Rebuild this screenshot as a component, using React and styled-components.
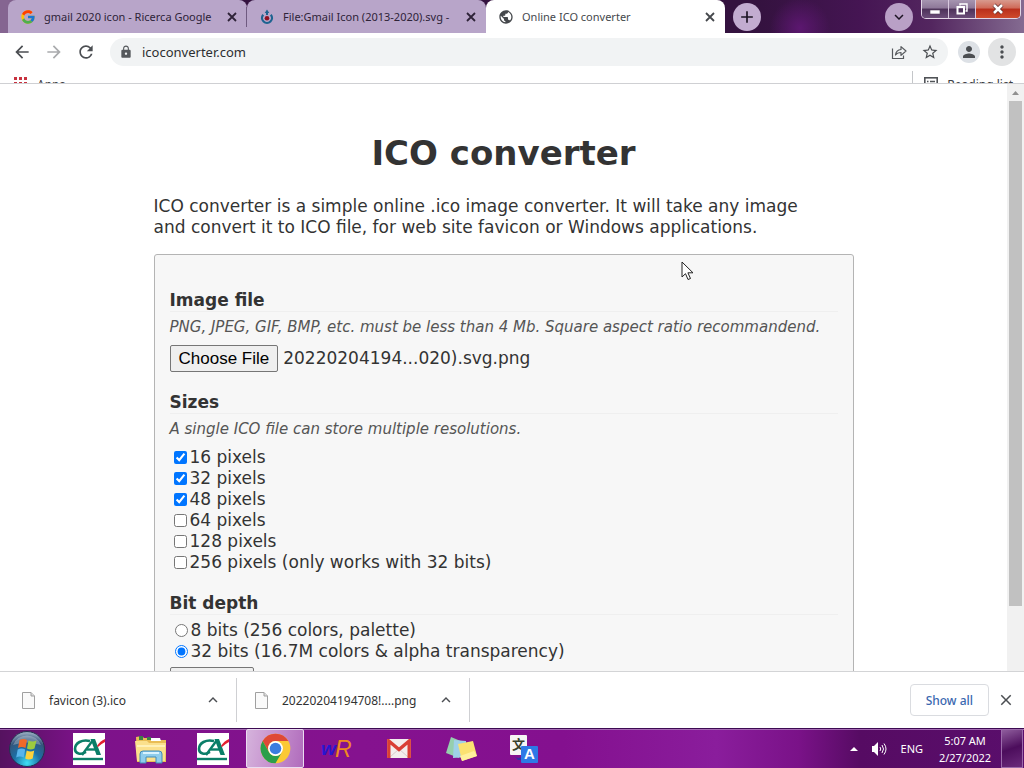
import React, { useRef, useState } from 'react';
import styled, { createGlobalStyle } from 'styled-components';
import {
  MdAdd,
  MdArrowBack,
  MdArrowForward,
  MdClose,
  MdExpandLess,
  MdExpandMore,
  MdLock,
  MdMoreVert,
  MdPerson,
  MdPublic,
  MdRefresh,
  MdStarBorder,
} from 'react-icons/md';
import { FcGoogle } from 'react-icons/fc';

const GlobalStyle = createGlobalStyle`
  * {
    box-sizing: border-box;
  }

  body {
    margin: 0;
    background: #fff;
    font-family: "Noto Sans", "Open Sans", sans-serif;
    font-size: 12px;
    color: #333;
  }

  button, input {
    font: inherit;
    color: inherit;
  }

  svg {
    display: block;
    flex: none;
  }
`;

const Desktop = styled.div`
  display: flex;
  flex-direction: column;
  height: 100vh;
  overflow: hidden;
  position: relative;
`;

/* ---------- tab strip ---------- */

const TabStrip = styled.header`
  display: flex;
  height: 33px;
  flex: none;
  padding-left: 8px;
  background:
    radial-gradient(circle at 800px 28px, #5c1770 0, transparent 30px),
    linear-gradient(90deg, #856591 0, #856591 8px, #34123f 60px, #34123f 74%, #451553 84%, #53265f 91%, #846b91 100%);
`;

const Tab = styled.div`
  display: flex;
  align-items: center;
  flex: 0 1 239px;
  min-width: 0;
  padding: 0 8px 0 12px;
  gap: 8px;
  font-size: 11px;
  background: ${(props) => (props.$active ? '#fff' : '#b8a5c9')};
  border-radius: 8px 8px 0 0;
  color: ${(props) => (props.$active ? '#45484c' : '#2e2338')};
`;

const TabTitle = styled.span`
  flex: 1;
  min-width: 0;
  overflow: hidden;
  white-space: nowrap;
`;

const TabDivider = styled.span`
  width: 1px;
  height: 20px;
  margin-left: -1px;
  margin-right: -8px;
  background: #6f5a80;
`;

const IconButton = styled.button`
  display: flex;
  align-items: center;
  justify-content: center;
  flex: none;
  width: ${(props) => props.$size || 28}px;
  height: ${(props) => props.$size || 28}px;
  padding: 0;
  border: 0;
  border-radius: 50%;
  background: ${(props) => props.$bg || 'transparent'};
  color: ${(props) => props.$color || '#4b4e52'};
`;

const StripTools = styled.div`
  display: flex;
  flex: 1;
  justify-content: space-between;
  padding: 3px 8px 0;
`;

const WindowButtons = styled.div`
  display: flex;
  flex: none;
  height: 19px;
  margin-right: 3px;
  border: 1px solid #e2d6e6;
  border-top: 0;
  border-radius: 0 0 5px 5px;
  overflow: hidden;
`;

const WindowButton = styled.button`
  display: flex;
  align-items: center;
  justify-content: center;
  width: ${(props) => (props.$close ? 44 : 27)}px;
  padding: 0;
  border: 0;
  border-right: ${(props) => (props.$close ? '0' : '1px solid #d8c9de')};
  background: ${(props) =>
    props.$close
      ? 'linear-gradient(#d89a8e 0, #cf6a58 45%, #b92f1c 50%, #cf4a2c 100%)'
      : 'linear-gradient(#a695b0 0, #8d7798 45%, #4d3159 50%, #6b4d79 100%)'};
`;

/* ---------- toolbar ---------- */

const Toolbar = styled.nav`
  display: flex;
  align-items: center;
  flex: none;
  height: 38px;
  padding: 0 8px;
  gap: 4px;
`;

const AddressBar = styled.form`
  display: flex;
  align-items: center;
  flex: 1;
  height: 28px;
  margin: 0 6px;
  padding: 0 6px 0 9px;
  gap: 9px;
  border-radius: 14px;
  background: #f1f3f4;
`;

const AddressInput = styled.input`
  flex: 1;
  min-width: 0;
  padding: 0;
  border: 0;
  outline: 0;
  background: transparent;
  font-size: 13px;
  color: #2c2e31;
`;

const ToolbarEnd = styled.div`
  display: flex;
  align-items: center;
  gap: 8px;
`;

const BookmarksBar = styled.div`
  display: flex;
  justify-content: space-between;
  flex: none;
  height: 13px;
  overflow: hidden;
  border-bottom: 1px solid #cfd0d3;
`;

const Bookmark = styled.a`
  display: flex;
  align-items: center;
  height: 26px;
  gap: 9px;
  padding: 0 11px 0 ${(props) => (props.$divided ? '11px' : '14px')};
  border-left: ${(props) => (props.$divided ? '1px solid #c4c6c9' : '0')};
  color: #3c4043;
  text-decoration: none;
`;

/* ---------- page ---------- */

const Viewport = styled.div`
  display: flex;
  flex: 1;
  min-height: 0;
`;

const Page = styled.main`
  flex: 1;
  min-width: 0;
  overflow: hidden;
  font-family: "DejaVu Sans", Verdana, sans-serif;
  font-size: 17px;
  line-height: 21px;
  color: #333;
`;

const Content = styled.div`
  max-width: 700px;
  margin: 0 auto;
`;

const PageTitle = styled.h1`
  margin: 48px 0 22px;
  font-size: 34px;
  line-height: 42px;
  text-align: center;
`;

const Intro = styled.p`
  margin: 0 0 16px;
  padding-right: 32px;
`;

const ConvertForm = styled.form`
  padding: 15px;
  border: 1px solid #b4b4b4;
  border-radius: 3px;
  background: #f7f7f7;
`;

const SectionTitle = styled.h2`
  margin: 20px 0 5px;
  border-bottom: 1px solid #efefef;
  font-size: 17px;
  line-height: 21px;
`;

const Hint = styled.p`
  margin: 0 0 7px;
  font-size: 15px;
  font-style: italic;
  color: #555;
`;

const FileRow = styled.div`
  display: flex;
  align-items: center;
  gap: 5px;
`;

const FormButton = styled.button`
  height: 27px;
  min-width: 84px;
  padding: 0 8px;
  border: 1px solid #767676;
  border-radius: 2px;
  background: #efefef;
  color: #000;
  font-family: "Liberation Sans", Arial, sans-serif;
  font-size: 17px;
`;

const Option = styled.label`
  display: flex;
  align-items: center;
  height: 21px;

  input {
    width: 13px;
    height: 13px;
    margin: 0 3px 0 ${(props) => (props.$radio ? 5 : 4)}px;
  }
`;

const Actions = styled.div`
  margin-top: 5px;
`;

const ScrollBar = styled.div`
  display: flex;
  flex-direction: column;
  align-items: center;
  flex: none;
  width: 17px;
  background: #f1f1f1;
`;

const ScrollArrow = styled.span`
  display: flex;
  align-items: center;
  height: 17px;
`;

const ScrollThumb = styled.div`
  width: 13px;
  height: 86%;
  background: #c1c1c1;
`;

/* ---------- downloads ---------- */

const DownloadBar = styled.section`
  display: flex;
  align-items: center;
  flex: none;
  height: 57px;
  padding: 0 4px;
  border-top: 1px solid #d3d4d6;
  background: #fff;
`;

const DownloadItem = styled.div`
  display: flex;
  align-items: center;
  flex: 0 1 233px;
  height: 44px;
  padding: 0 9px 0 16px;
  border-right: 1px solid #cfd0d3;
`;

const DownloadName = styled.span`
  flex: 1;
  margin-left: 12px;
  white-space: nowrap;
`;

const ShowAll = styled.button`
  height: 32px;
  margin-left: auto;
  margin-right: 3px;
  padding: 0 15px;
  border: 1px solid #dadce0;
  border-radius: 4px;
  background: #fff;
  color: #3a68b0;
  font-weight: 500;
`;

/* ---------- taskbar ---------- */

const Taskbar = styled.footer`
  display: flex;
  align-items: center;
  flex: none;
  height: 40px;
  border-top: 1px solid #3c0a52;
  background: linear-gradient(90deg, #55125f 0, #7d128a 8%, #85128f 35%, #84108f 55%, #8a1d9c 70%, #7a1288 78%, #560b63 84%, #5a0e6c 100%);
  box-shadow: inset 0 1px 0 #a66bb4;
  color: #fff;
`;

const StartButton = styled.button`
  display: flex;
  justify-content: center;
  width: 54px;
  margin-right: 6px;
  padding: 0;
  border: 0;
  background: transparent;
`;

const TaskList = styled.div`
  display: flex;
  flex: 1;
  gap: 4px;
`;

const TaskButton = styled.button`
  display: flex;
  align-items: center;
  justify-content: center;
  width: 58px;
  height: 39px;
  padding: 0;
  border: ${(props) => (props.$open ? '1px solid #eadcf0' : '0')};
  border-radius: 2px;
  background: ${(props) =>
    props.$open ? 'linear-gradient(100deg, #d5b3dc 0, #c793cf 45%, #b06cbc 100%)' : 'transparent'};
`;

const Tray = styled.div`
  display: flex;
  align-items: center;
  height: 100%;
  font-size: 11px;
`;

const Language = styled.span`
  margin: 0 15px 0 14px;
`;

const Clock = styled.time`
  width: 54px;
  line-height: 17px;
  text-align: center;
  white-space: nowrap;
`;

const ShowDesktop = styled.button`
  width: 22px;
  height: 100%;
  margin-left: 9px;
  margin-right: 1px;
  padding: 0;
  border: 1px solid #9c6bab;
  background: linear-gradient(160deg, #8f5d9d, #4c0d5c 50%, #6b2a7b);
`;

const Cursor = styled.svg`
  position: absolute;
  left: 681px;
  top: 261px;
`;

/* ---------- drawings ---------- */

const TabCloseIcon = () => (
  <svg width="10" height="10" viewBox="0 0 10 10" stroke="currentColor" strokeWidth="1.800">
    <path d="M1 1l8 8M9 1l-8 8" />
  </svg>
);

const CommonsIcon = () => (
  <svg width="16" height="16" viewBox="0 0 16 16" fill="none">
    <path d="M4.2 5.7a5 5 0 1 0 7.6 0" stroke="#1d6390" strokeWidth="2.2" />
    <path d="M8 0.5 10.3 4H9v2H7V4H5.7z" fill="#1d6390" />
    <circle cx="8" cy="9.3" r="2.3" fill="#8f1022" />
  </svg>
);

const ShareIcon = () => (
  <svg width="16" height="16" viewBox="0 0 16 16" fill="none" stroke="#55585c" strokeWidth="1.2">
    <path d="M1.5 4.5v10h11v-3" />
    <path d="M4.5 11c.4-3.600 2.300-5.300 5.500-5.500V2.600l5 4.400-5 4.400V8.500c-2.500 0-4.200.7-5.500 2.500z" strokeLinejoin="round" />
  </svg>
);

const AppsIcon = () => (
  <svg width="14" height="14" viewBox="0 0 14 14" fill="#c8323f">
    {[0, 5, 10].map((y) => [0, 5, 10].map((x) => <rect key={`${x}-${y}`} x={x} y={y} width="3" height="3" />))}
  </svg>
);

const ReadingIcon = () => (
  <svg width="14" height="14" viewBox="0 0 14 14" fill="none" stroke="#505357" strokeWidth="1.600">
    <rect x="0.800" y="0.800" width="12.400" height="12.400" />
    <path d="M3 4.500h1.500M6 4.500h5M3 7.500h1.500M6 7.500h5M3 10h1.500M6 10h5" />
  </svg>
);

const MinimizeIcon = () => (
  <svg width="12" height="12" viewBox="0 0 12 12">
    <rect x="1" y="7" width="10" height="4" fill="#fff" stroke="#54425f" strokeWidth="0.600" />
  </svg>
);

const RestoreIcon = () => (
  <svg width="12" height="12" viewBox="0 0 12 12" fill="none" stroke="#fff">
    <path d="M4 2.500V1h7v7H9.500" strokeWidth="1.400" />
    <rect x="1.500" y="4" width="6.500" height="6.500" strokeWidth="2" />
  </svg>
);

const CrossIcon = () => (
  <svg width="12" height="12" viewBox="0 0 12 12">
    <path d="M2 2l8 8M10 2l-8 8" stroke="#5c2a2a" strokeWidth="4" />
    <path d="M2 2l8 8M10 2l-8 8" stroke="#fff" strokeWidth="2.600" />
  </svg>
);

const FileIcon = () => (
  <svg width="17" height="17" viewBox="0 0 17 17">
    <path d="M2.500.5h8.500l3.500 3.500v12.500h-12z" fill="#fafafa" stroke="#a0a0a0" />
    <path d="M11 .5V4h3.500" fill="#ddd" stroke="#a0a0a0" />
  </svg>
);

const StartOrb = () => (
  <svg width="38" height="38" viewBox="0 0 38 38">
    <defs>
      <radialGradient id="orb" cx="50%" cy="90%" r="85%">
        <stop offset="0" stopColor="#3fe0f5" />
        <stop offset="0.450" stopColor="#1c6ea4" />
        <stop offset="0.800" stopColor="#34567c" />
        <stop offset="1" stopColor="#8fa5bb" />
      </radialGradient>
    </defs>
    <circle cx="19" cy="19" r="17.500" fill="url(#orb)" stroke="#24324f" />
    <path d="M5 15a15 15 0 0 1 28 0q-14-5-28 0z" fill="#fff" opacity="0.280" />
    <path d="M11.500 10q4-2 7.500 0l-1.500 8q-4-2-7.500 0z" fill="#ef6a29" />
    <path d="M20.500 10.500q4 2 8 0l-2 8q-4 2-7.500 0z" fill="#9dcb3f" />
    <path d="M9.700 19.500q4-2 7.500 0l-1.500 8q-4-2-7.500 0z" fill="#58b4ec" />
    <path d="M18.700 20.500q4 2 7.500 0l-1.500 8q-4 2-7.500 0z" fill="#fcd13b" />
  </svg>
);

const BankIcon = () => (
  <svg width="32" height="32" viewBox="0 0 32 32">
    <rect width="32" height="32" fill="#fff" />
    <path d="M17 8C9 6 2 10 2 16c0 5 6 6 11 3" fill="none" stroke="#0a7e68" strokeWidth="2.600" />
    <path d="M9 22L20 7" stroke="#0a7e68" strokeWidth="2.400" />
    <path d="M17.500 6h4.500l6 16h-4.500z" fill="#0a7e68" />
    <path d="M14 16.500h11" stroke="#0a7e68" strokeWidth="2.400" />
    <path d="M24 13q3-5 8-7v3q-4 2-7 5z" fill="#e3202f" />
    <path d="M0 26h30" stroke="#0a7e68" strokeWidth="2.400" />
  </svg>
);

const ExplorerIcon = () => (
  <svg width="34" height="32" viewBox="0 0 34 32">
    <path d="M2 4l6-1 2 2h8l1 2h13v22H3z" fill="#e9bd55" />
    <path d="M5 3h4v4H5zM13 4h4v3h-4z" fill="#3d7f47" />
    <path d="M17 5h9l1 3H17z" fill="#fff" />
    <path d="M1 8h12l2 2h17l-1 18H3z" fill="#fbe08c" />
    <path d="M3 13h28" stroke="#fff1b8" strokeWidth="2" />
    <path d="M6 30V21q0-3 3-3h16q3 0 3 3v9h-6v-6H12v6z" fill="#8ecdec" stroke="#418bb9" />
    <path d="M9 20h16" stroke="#d8f3ff" strokeWidth="2" />
  </svg>
);

const ChromeIcon = () => (
  <svg width="31" height="31" viewBox="0 0 48 48">
    <circle cx="24" cy="24" r="23" fill="#fbc934" />
    <path d="M4.080 12.500A23 23 0 0 1 43.920 12.500H24A11.500 11.500 0 0 0 14.040 29.750z" fill="#df4937" />
    <path d="M4.080 12.500A23 23 0 0 0 24 47L33.960 29.750A11.500 11.500 0 0 1 14.040 29.750z" fill="#2b9f4a" />
    <circle cx="24" cy="24" r="11.500" fill="#fff" />
    <circle cx="24" cy="24" r="9" fill="#3b7de0" />
  </svg>
);

const WordReferenceIcon = () => (
  <svg width="32" height="28" viewBox="0 0 32 28" fontFamily="Liberation Sans, sans-serif" fontStyle="italic">
    <text x="0" y="20" fontSize="19" fontWeight="700" fill="#2716cf">w</text>
    <text x="14" y="22" fontSize="23" fill="#ee8a1e">R</text>
  </svg>
);

const GmailIcon = () => (
  <svg width="24" height="19" viewBox="0 0 24 19">
    <rect width="24" height="19" rx="1" fill="#f3eded" />
    <path d="M3 18L12 10l9 8" fill="none" stroke="#d6cccc" />
    <path d="M1.800 19V2L12 10.500 22.200 2v17" fill="none" stroke="#d93f35" strokeWidth="3.400" />
  </svg>
);

const NotesIcon = () => (
  <svg width="32" height="26" viewBox="0 0 32 26">
    <path d="M6 1l12 5-4 16L1 17z" fill="#95cfae" />
    <path d="M9 4l12 1v16l-13 1z" fill="#9fd0e8" />
    <path d="M13 8l15-3 4 15-15 5z" fill="#fbe271" />
    <path d="M15 20l14-5 3 5-15 5z" fill="#fff09d" />
  </svg>
);

const TranslateIcon = () => (
  <svg width="29" height="28" viewBox="0 0 29 28">
    <rect x="1" y="0" width="17" height="20" rx="1" fill="#f6f5f4" />
    <path d="M5 21q4 4 9 0v4H9z" fill="#3131a5" />
    <text x="3" y="14" fontSize="13" fontWeight="700" fontFamily="Noto Sans CJK SC, sans-serif" fill="#38402b">文</text>
    <rect x="12" y="11" width="17" height="17" rx="1" fill="#2d79e6" />
    <text x="15" y="24" fontSize="15" fontWeight="700" fontFamily="Liberation Sans, sans-serif" fill="#fff">A</text>
  </svg>
);

const SpeakerIcon = () => (
  <svg width="16" height="16" viewBox="0 0 16 16" fill="none" stroke="#fff">
    <path d="M1 5h2l4-4v14l-4-4H1z" fill="#fff" stroke="none" />
    <path d="M9 6q1.500 2 0 4M11 4q3 4 0 8M13 2.500q4 5.500 0 11" />
  </svg>
);

const TABS = [
  { title: 'gmail 2020 icon - Ricerca Google', icon: <FcGoogle size={16} /> },
  { title: 'File:Gmail Icon (2013-2020).svg -', icon: <CommonsIcon /> },
  { title: 'Online ICO converter', icon: <MdPublic size={16} />, active: true },
];

const SIZES = [
  { label: '16 pixels', checked: true },
  { label: '32 pixels', checked: true },
  { label: '48 pixels', checked: true },
  { label: '64 pixels' },
  { label: '128 pixels' },
  { label: '256 pixels (only works with 32 bits)' },
];

const DEPTHS = ['8 bits (256 colors, palette)', '32 bits (16.7M colors & alpha transparency)'];

const TASKS = [
  { name: 'Bank', icon: <BankIcon /> },
  { name: 'Explorer', icon: <ExplorerIcon /> },
  { name: 'Bank account', icon: <BankIcon /> },
  { name: 'Chrome', icon: <ChromeIcon />, open: true },
  { name: 'WordReference', icon: <WordReferenceIcon /> },
  { name: 'Gmail', icon: <GmailIcon /> },
  { name: 'Sticky Notes', icon: <NotesIcon /> },
  { name: 'Translate', icon: <TranslateIcon /> },
];

const DOWNLOADS = ['favicon (3).ico', '20220204194708!....png'];

const Converter = () => {
  const fileInput = useRef(null);
  const [fileName, setFileName] = useState('20220204194...020).svg.png');

  return (
    <Content>
      <PageTitle>ICO converter</PageTitle>
      <Intro>
        ICO converter is a simple online .ico image converter. It will take any image and convert it to ICO file,
        for web site favicon or Windows applications.
      </Intro>
      <ConvertForm onSubmit={(e) => e.preventDefault()}>
        <SectionTitle>Image file</SectionTitle>
        <Hint>PNG, JPEG, GIF, BMP, etc. must be less than 4 Mb. Square aspect ratio recommandend.</Hint>
        <FileRow>
          <FormButton type="button" onClick={() => fileInput.current.click()}>Choose File</FormButton>
          <input
            ref={fileInput}
            type="file"
            hidden
            onChange={(e) => e.target.files[0] && setFileName(e.target.files[0].name)}
          />
          <span>{fileName}</span>
        </FileRow>
        <SectionTitle>Sizes</SectionTitle>
        <Hint>A single ICO file can store multiple resolutions.</Hint>
        {SIZES.map((size) => (
          <Option key={size.label}>
            <input type="checkbox" defaultChecked={size.checked} />
            {size.label}
          </Option>
        ))}
        <SectionTitle>Bit depth</SectionTitle>
        {DEPTHS.map((depth, i) => (
          <Option key={depth} $radio>
            <input type="radio" name="depth" defaultChecked={i === 1} />
            {depth}
          </Option>
        ))}
        <Actions>
          <FormButton type="submit">Convert</FormButton>
        </Actions>
      </ConvertForm>
    </Content>
  );
};

const App = () => {
  return (
    <>
      <GlobalStyle />
      <Desktop>
        <TabStrip>
          {TABS.map((tab, i) => (
            <Tab key={tab.title} $active={tab.active}>
              {tab.icon}
              <TabTitle>{tab.title}</TabTitle>
              <IconButton $size={14} $color="inherit" aria-label="Close tab">
                <TabCloseIcon />
              </IconButton>
              {i === 0 && <TabDivider />}
            </Tab>
          ))}
          <StripTools>
            <IconButton $bg="#c2acd0" $color="#1d1424" aria-label="New tab"><MdAdd size={20} /></IconButton>
            <IconButton $bg="#b9a0c6" $color="#1d1424" aria-label="Search tabs"><MdExpandMore size={18} /></IconButton>
          </StripTools>
          <WindowButtons>
            <WindowButton aria-label="Minimize"><MinimizeIcon /></WindowButton>
            <WindowButton aria-label="Restore"><RestoreIcon /></WindowButton>
            <WindowButton $close aria-label="Close"><CrossIcon /></WindowButton>
          </WindowButtons>
        </TabStrip>
        <Toolbar>
          <IconButton aria-label="Back"><MdArrowBack size={20} /></IconButton>
          <IconButton $color="#a9abad" aria-label="Forward"><MdArrowForward size={20} /></IconButton>
          <IconButton aria-label="Reload"><MdRefresh size={20} /></IconButton>
          <AddressBar onSubmit={(e) => e.preventDefault()}>
            <MdLock size={14} color="#55585c" />
            <AddressInput aria-label="Address" defaultValue="icoconverter.com" />
            <IconButton $size={20} type="button" aria-label="Share"><ShareIcon /></IconButton>
            <IconButton $size={24} type="button" aria-label="Bookmark"><MdStarBorder size={18} /></IconButton>
          </AddressBar>
          <ToolbarEnd>
            <IconButton $size={22} $bg="#dde1e6" aria-label="Profile"><MdPerson size={18} /></IconButton>
            <IconButton $bg="#e2e3e4" aria-label="Menu"><MdMoreVert size={20} /></IconButton>
          </ToolbarEnd>
        </Toolbar>
        <BookmarksBar>
          <Bookmark href="#apps"><AppsIcon />Apps</Bookmark>
          <Bookmark href="#reading" $divided><ReadingIcon />Reading list</Bookmark>
        </BookmarksBar>
        <Viewport>
          <Page>
            <Converter />
          </Page>
          <ScrollBar>
            <ScrollArrow>
              <svg width="7" height="4" viewBox="0 0 7 4"><path d="M0 4l3.500-4L7 4z" fill="#909090" /></svg>
            </ScrollArrow>
            <ScrollThumb />
          </ScrollBar>
        </Viewport>
        <DownloadBar>
          {DOWNLOADS.map((name) => (
            <DownloadItem key={name}>
              <FileIcon />
              <DownloadName>{name}</DownloadName>
              <IconButton aria-label={`Options for ${name}`}><MdExpandLess size={18} /></IconButton>
            </DownloadItem>
          ))}
          <ShowAll>Show all</ShowAll>
          <IconButton aria-label="Close downloads"><MdClose size={18} /></IconButton>
        </DownloadBar>
        <Taskbar>
          <StartButton aria-label="Start"><StartOrb /></StartButton>
          <TaskList>
            {TASKS.map((task) => (
              <TaskButton key={task.name} $open={task.open} aria-label={task.name}>{task.icon}</TaskButton>
            ))}
          </TaskList>
          <Tray>
            <svg width="28" height="4" viewBox="0 0 28 4"><path d="M7 4l4-4 4 4z" fill="#fff" /></svg>
            <SpeakerIcon />
            <Language>ENG</Language>
            <Clock>
              5:07 AM
              <br />
              2/27/2022
            </Clock>
            <ShowDesktop aria-label="Show desktop" />
          </Tray>
        </Taskbar>
        <Cursor width="13" height="20" viewBox="0 0 13 20">
          <path d="M1 1v15l3.500-3.300L7 18.500l2.500-1-2.600-5.700H12z" fill="#fff" stroke="#222" />
        </Cursor>
      </Desktop>
    </>
  );
};

export default App;
